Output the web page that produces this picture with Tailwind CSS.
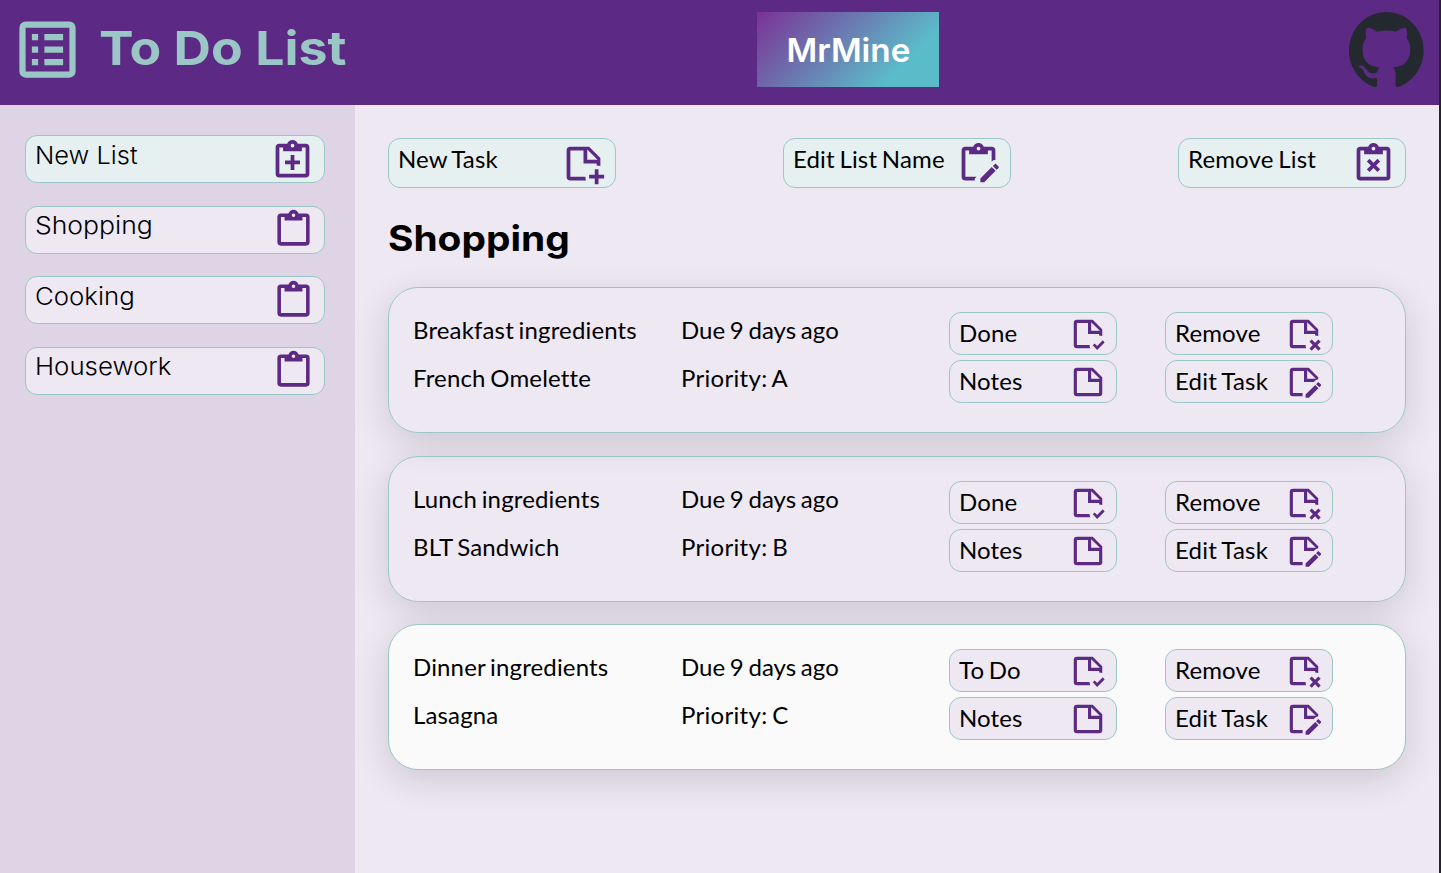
<!DOCTYPE html>
<html lang="en">
<head>
<meta charset="utf-8">
<title>To Do List</title>
<script src="https://cdn.jsdelivr.net/npm/@tailwindcss/browser@4"></script>
</head>
<body class="bg-[#222428] text-black font-['Lato',sans-serif] text-2xl leading-[29px]">
<svg class="hidden">
  <symbol id="clip" viewBox="0 0 24 24"><path fill-rule="evenodd" d="M19 3H14.82C14.4 1.84 13.3 1 12 1S9.6 1.84 9.18 3H5A2 2 0 0 0 3 5V19A2 2 0 0 0 5 21H19A2 2 0 0 0 21 19V5A2 2 0 0 0 19 3M12 3A1 1 0 1 1 12 5A1 1 0 1 1 12 3M7 7H17V5H19V19H5V5H7Z"/></symbol>
  <symbol id="clip-plus" viewBox="0 0 24 24"><use href="#clip" width="24" height="24"/><path d="M11 9H13V12H16V14H13V17H11V14H8V12H11Z"/></symbol>
  <symbol id="clip-x" viewBox="0 0 24 24"><use href="#clip" width="24" height="24"/><path d="M15.54 10.88L13.41 13L15.54 15.12L14.12 16.54L12 14.41L9.88 16.54L8.46 15.12L10.59 13L8.46 10.88L9.88 9.46L12 11.59L14.12 9.46Z"/></symbol>
  <symbol id="clip-edit" viewBox="0 0 24 24"><path fill-rule="evenodd" d="M21 10.2C20.1 10.1 19.5 10.5 19 11V5H17V7H7V5H5V19H11L10 20V21H5A2 2 0 0 1 3 19V5A2 2 0 0 1 5 3H9.18C9.6 1.84 10.7 1 12 1S14.4 1.84 14.82 3H19A2 2 0 0 1 21 5ZM12 3A1 1 0 1 0 12 5A1 1 0 1 0 12 3Z"/><use href="#pencil" width="24" height="24"/></symbol>
  <symbol id="pencil" viewBox="0 0 24 24"><path d="M22.7 14.35L21.7 15.35L19.65 13.35L20.65 12.35C20.85 12.14 21.19 12.13 21.42 12.35L22.7 13.63C22.89 13.83 22.89 14.15 22.7 14.35M13 19.94L19.07 13.88L21.12 15.88L15.06 22H13V19.94Z"/></symbol>
  <symbol id="note" viewBox="0 0 24 24"><path fill-rule="evenodd" d="M14 10H19.5L14 4.5ZM5 3H15L21 9V19A2 2 0 0 1 19 21H5A2 2 0 0 1 3 19V5A2 2 0 0 1 5 3M5 5V19H19V12H12V5Z"/></symbol>
  <symbol id="note-cut" viewBox="0 0 24 24"><path fill-rule="evenodd" d="M14 10H19.5L14 4.5ZM5 3H15L21 9V13.34C20.37 13.12 19.7 13 19 13V12H12V5H5V19H13C13 19.7 13.12 20.37 13.34 21H5A2 2 0 0 1 3 19V5A2 2 0 0 1 5 3Z"/></symbol>
  <symbol id="note-plus" viewBox="0 0 24 24"><use href="#note-cut" width="24" height="24"/><path d="M18 15H20V18H23V20H20V23H18V20H15V18H18Z"/></symbol>
  <symbol id="note-check" viewBox="0 0 24 24"><use href="#note-cut" width="24" height="24"/><path d="M17.75 22.16L15 19.16L16.16 18L17.75 19.59L21.34 16L22.5 17.41Z"/></symbol>
  <symbol id="note-x" viewBox="0 0 24 24"><use href="#note-cut" width="24" height="24"/><path d="M22.54 16.88L20.41 19L22.54 21.12L21.12 22.54L19 20.41L16.88 22.54L15.46 21.12L17.59 19L15.46 16.88L16.88 15.46L19 17.59L21.12 15.46Z"/></symbol>
  <symbol id="note-edit" viewBox="0 0 24 24"><path fill-rule="evenodd" d="M14 10H19.5L14 4.5ZM5 3H15L21 9V10.2C20.2 10.3 19.6 10.6 19.2 11L18.2 12H12V5H5V19H11.1V21H5A2 2 0 0 1 3 19V5A2 2 0 0 1 5 3Z"/><use href="#pencil" width="24" height="24"/></symbol>
</svg>

<div class="flex h-[873px] w-[1439px] flex-col overflow-hidden bg-[#eee8f3]">
  <header class="flex h-[105px] shrink-0 bg-[#5c2a85] pt-3">
    <div class="flex w-[757px] pl-[9.5px]">
      <svg class="-mt-[0.5px] h-[75px] w-[75px] fill-[#9ac6c6]" viewBox="0 0 24 24"><path fill-rule="evenodd" d="M5 3H19A2 2 0 0 1 21 5V19A2 2 0 0 1 19 21H5A2 2 0 0 1 3 19V5A2 2 0 0 1 5 3M5 5V19H19V5ZM7 7H9V9H7ZM11 7H17V9H11ZM7 11H9V13H7ZM11 11H17V13H11ZM7 15H9V17H7ZM11 15H17V17H11Z"/></svg>
      <h1 class="ml-[14px] mt-[7px] origin-left scale-x-[1.103] whitespace-nowrap font-['Inter',sans-serif] text-[47px] leading-[58px] font-bold text-[#9ac6c6]">To Do List</h1>
    </div>
    <div class="flex h-[75px] w-[182px] items-center justify-center bg-[linear-gradient(135deg,#7b3196_0%,#5bbcc9_78%)] font-['Inter',sans-serif] text-[33px] font-semibold text-white"><span class="mt-px scale-x-[1.01]">MrMine</span></div>
    <svg class="ml-[410px] h-[75px] w-[75px] fill-[#24292f]" viewBox="0 0 98 96" preserveAspectRatio="none"><path d="M48.854 0C21.839 0 0 22 0 49.217c0 21.756 13.993 40.172 33.405 46.69 2.427.49 3.316-1.059 3.316-2.362 0-1.141-.08-5.052-.08-9.127-13.59 2.934-16.42-5.867-16.42-5.867-2.184-5.704-5.42-7.17-5.42-7.17-4.448-3.015.324-3.015.324-3.015 4.934.326 7.523 5.052 7.523 5.052 4.367 7.496 11.404 5.378 14.235 4.074.404-3.178 1.699-5.378 3.074-6.6-10.839-1.141-22.243-5.378-22.243-24.283 0-5.378 1.94-9.778 5.014-13.2-.485-1.222-2.184-6.275.486-13.038 0 0 4.125-1.304 13.426 5.052a46.97 46.97 0 0 1 12.214-1.63c4.125 0 8.33.571 12.213 1.63 9.302-6.356 13.427-5.052 13.427-5.052 2.67 6.763.97 11.816.485 13.038 3.155 3.422 5.015 7.822 5.015 13.2 0 18.905-11.404 23.06-22.324 24.283 1.78 1.548 3.316 4.481 3.316 9.126 0 6.6-.08 11.897-.08 13.526 0 1.304.89 2.853 3.316 2.364 19.412-6.52 33.405-24.935 33.405-46.691C97.707 22 75.788 0 48.854 0z"/></svg>
  </header>

  <div class="flex grow">
    <aside class="flex w-[355px] shrink-0 flex-col gap-[22.6px] bg-[#dfd4e6] pt-[30px] pl-[25px] font-['Inter',sans-serif]">
      <button class="flex h-12 w-[300px] justify-between rounded-xl border border-[#9ac6c6] bg-[#e6f0f1] pt-[2px] pr-[9px] pl-[9px]"><span class="mt-[3px] origin-left scale-x-[1.06] font-light">New List</span><svg class="size-[45px] fill-[#5c2a85]"><use href="#clip-plus"/></svg></button>
      <button class="flex h-12 w-[300px] justify-between rounded-xl border border-[#9ac6c6] bg-[#eee8f3] pt-px pr-[9px] pl-[9px]"><span class="mt-[3px] origin-left scale-x-[1.105] font-light">Shopping</span><svg class="size-[43px] fill-[#5c2a85]"><use href="#clip"/></svg></button>
      <button class="flex h-12 w-[300px] justify-between rounded-xl border border-[#9ac6c6] bg-[#eee8f3] pt-px pr-[9px] pl-[9px]"><span class="mt-[4px] origin-left scale-x-[1.075] font-light">Cooking</span><svg class="mt-px size-[43px] fill-[#5c2a85]"><use href="#clip"/></svg></button>
      <button class="flex h-12 w-[300px] justify-between rounded-xl border border-[#9ac6c6] bg-[#eee8f3] pt-px pr-[9px] pl-[9px]"><span class="mt-[3px] origin-left scale-x-[1.075] font-light">Housework</span><svg class="size-[43px] fill-[#5c2a85]"><use href="#clip"/></svg></button>
    </aside>

    <main class="flex grow flex-col px-[33px] pt-[33px] tracking-[0.15px] [word-spacing:-1.6px] [font-variant-ligatures:none]">
      <div class="flex justify-between">
        <button class="flex h-[50px] w-[228px] justify-between rounded-xl border border-[#9ac6c6] bg-[#e6f0f1] px-[9px] pt-[2px]"><span class="mt-[3px] tracking-[0.15px] [word-spacing:-1.6px]">New Task</span><svg class="size-[45px] fill-[#5c2a85]"><use href="#note-plus"/></svg></button>
        <button class="flex h-[50px] w-[228px] justify-between rounded-xl border border-[#9ac6c6] bg-[#e6f0f1] px-[9px] pt-[2px]"><span class="mt-[3px] tracking-[0.15px] whitespace-nowrap [word-spacing:-1.6px]">Edit List Name</span><svg class="size-[45px] fill-[#5c2a85]"><use href="#clip-edit"/></svg></button>
        <button class="flex h-[50px] w-[228px] justify-between rounded-xl border border-[#9ac6c6] bg-[#e6f0f1] px-[9px] pt-[2px]"><span class="mt-[3px] tracking-[0.15px] [word-spacing:-1.6px]">Remove List</span><svg class="size-[45px] fill-[#5c2a85]"><use href="#clip-x"/></svg></button>
      </div>
      <h2 class="mt-[28px] mb-[27px] h-11 w-fit origin-left scale-x-[1.11] font-['Inter',sans-serif] text-[35px] leading-[44px] font-bold tracking-normal">Shopping</h2>
      <div id="tasks" class="flex flex-col gap-[22.6px]"></div>
    </main>
  </div>
</div>

<template id="card">
  <section class="flex h-[146px] rounded-[30px] border border-[#9ac6c6] pt-6 pl-6 shadow-[0_10px_36px_rgba(0,0,0,0.14)]">
    <div class="flex w-[268px] flex-col gap-[19px] pt-[3px]"><p data-f="0"></p><p data-f="1"></p></div>
    <div class="flex w-[268px] flex-col gap-[19px] pt-[3px]"><p class="tracking-[0.05px]">Due 9 days ago</p><p class="tracking-[0.3px]" data-f="2"></p></div>
    <div class="grid auto-rows-[43px] grid-cols-[168px_168px] gap-x-12 gap-y-[5px]">
      <button class="flex justify-between rounded-xl border border-[#9ac6c6] bg-[#eee8f3] px-[9px] pt-[2px]"><span class="mt-[3px] [word-spacing:-1.6px]" data-f="3"></span><svg class="size-[38px] fill-[#5c2a85]"><use href="#note-check"/></svg></button>
      <button class="flex justify-between rounded-xl border border-[#9ac6c6] bg-[#eee8f3] px-[9px] pt-[2px]"><span class="mt-[3px] tracking-[0.15px]">Remove</span><svg class="size-[38px] fill-[#5c2a85]"><use href="#note-x"/></svg></button>
      <button class="flex justify-between rounded-xl border border-[#9ac6c6] bg-[#eee8f3] px-[9px] pt-[2px]"><span class="mt-[3px] tracking-[0.1px]">Notes</span><svg class="size-[38px] fill-[#5c2a85]"><use href="#note"/></svg></button>
      <button class="flex justify-between rounded-xl border border-[#9ac6c6] bg-[#eee8f3] px-[9px] pt-[2px]"><span class="mt-[3px] tracking-[0.25px] [word-spacing:-1.6px]">Edit Task</span><svg class="size-[38px] fill-[#5c2a85]"><use href="#note-edit"/></svg></button>
    </div>
  </section>
</template>
<script>
  const tasks = [
    ['Breakfast ingredients', 'French Omelette', 'Priority: A', 'Done'],
    ['Lunch ingredients', 'BLT Sandwich', 'Priority: B', 'Done'],
    ['Dinner ingredients', 'Lasagna', 'Priority: C', 'To Do'],
  ];
  for (const t of tasks) {
    const c = document.getElementById('card').content.cloneNode(true);
    c.querySelectorAll('[data-f]').forEach(e => { e.textContent = t[e.dataset.f]; });
    if (t[3] === 'To Do') c.querySelector('section').classList.add('bg-[#fafafa]');
    document.getElementById('tasks').append(c);
  }
</script>
</body>
</html>
